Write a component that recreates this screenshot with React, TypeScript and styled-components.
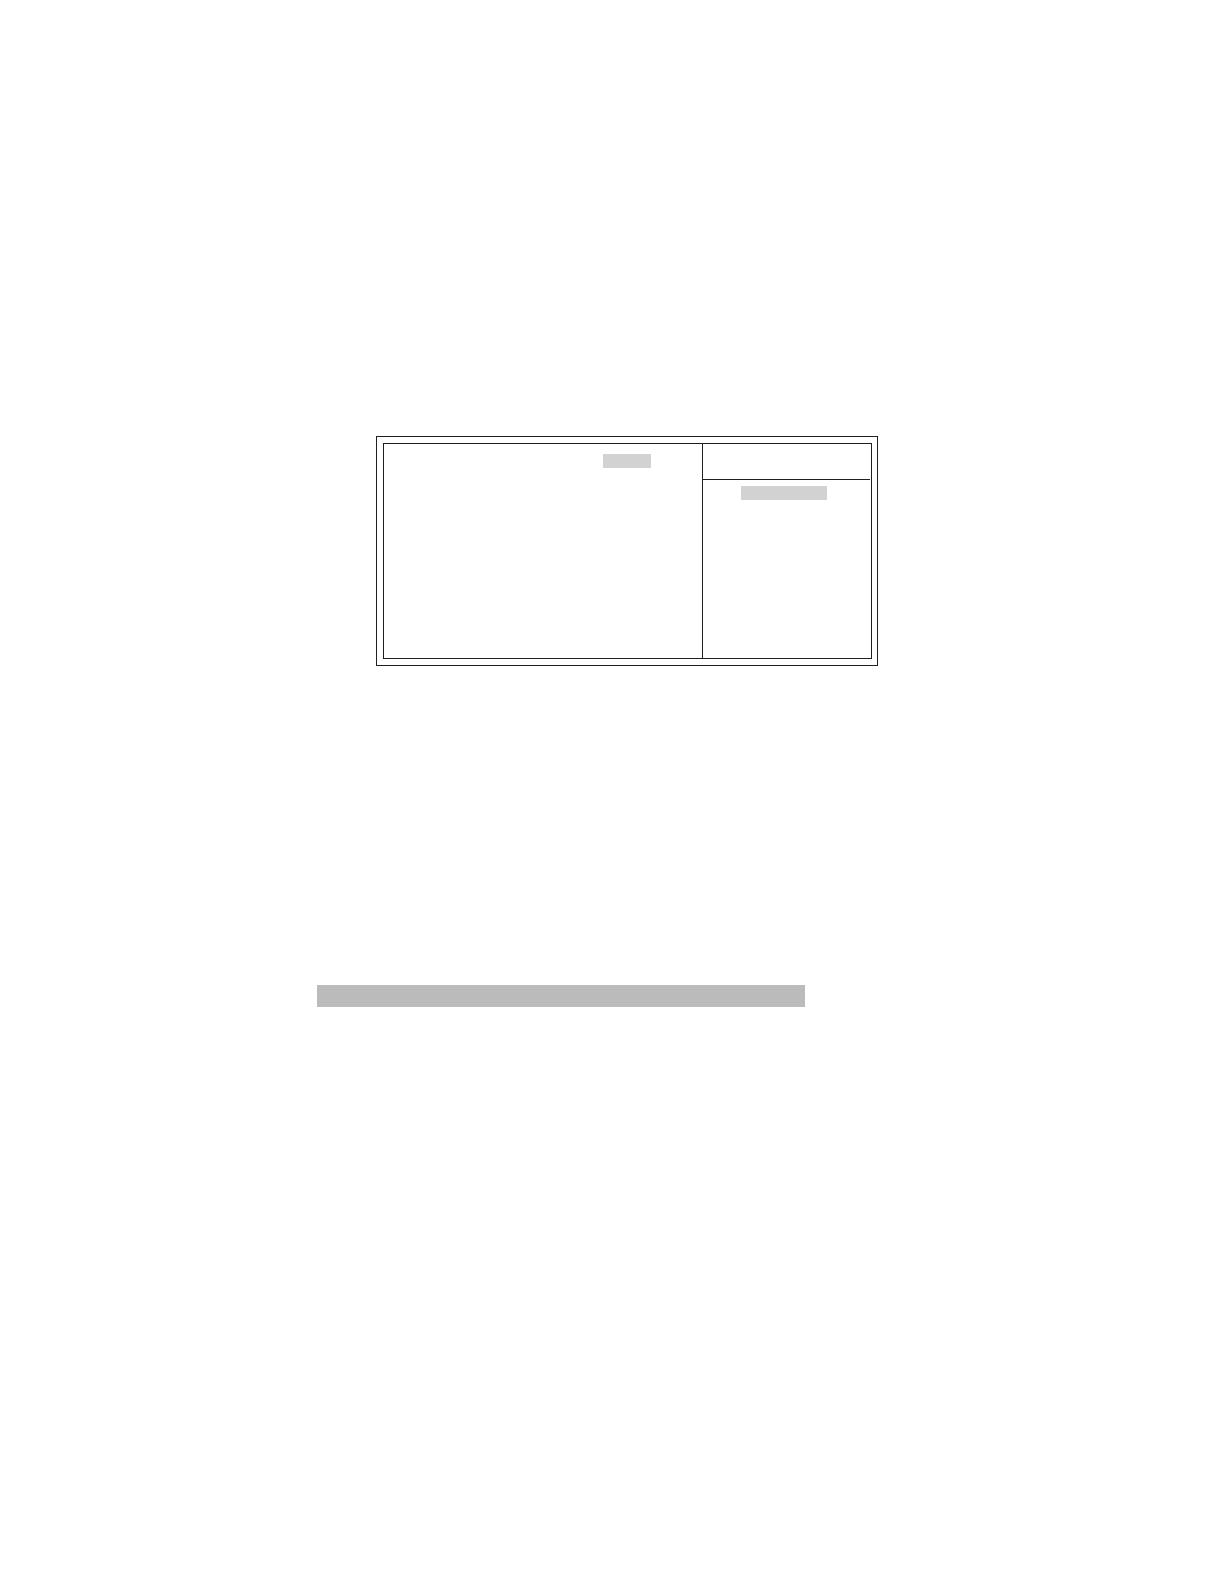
import React from "react";
import styled, { createGlobalStyle } from "styled-components";

const line = "#231f20";

const GlobalStyle = createGlobalStyle`
  *, *::before, *::after { box-sizing: border-box; }
  body {
    margin: 0;
    background: #ffffff;
    font-family: "Liberation Sans", Arial, sans-serif;
  }
`;

const Page = styled.main`
  display: flex;
  flex-direction: column;
  gap: 319px;
  padding: 436px 346px 160px 317px;
`;

const Screen = styled.section`
  margin-left: 59px;
  padding: 6px 5px 6px 6px;
  border: 1px solid ${line};
`;

const Columns = styled.div`
  display: grid;
  grid-template-columns: minmax(0, 1fr) 169px;
  min-height: 216px;
  border: 1px solid ${line};
`;

const Options = styled.div`
  display: flex;
  justify-content: flex-end;
  align-items: flex-start;
  padding: 10px 51px;
`;

const Help = styled.aside`
  display: flex;
  flex-direction: column;
  border-left: 1px solid ${line};
`;

const HelpHeader = styled.header`
  height: 36px;
  margin-right: 1px;
  border-bottom: 1px solid ${line};
`;

const HelpBody = styled.div`
  padding: 6px 38px;
`;

const Highlight = styled.div<{ $width: number }>`
  width: ${({ $width }) => $width}px;
  height: 14px;
  background: #d2d2d2;
`;

const Band = styled.div`
  height: 22px;
  margin-right: 73px;
  background: #bbbbbb;
`;

export default function App() {
  return (
    <>
      <GlobalStyle />
      <Page>
        <Screen>
          <Columns>
            <Options>
              <Highlight $width={48} />
            </Options>
            <Help>
              <HelpHeader />
              <HelpBody>
                <Highlight $width={86} />
              </HelpBody>
            </Help>
          </Columns>
        </Screen>
        <Band />
      </Page>
    </>
  );
}
